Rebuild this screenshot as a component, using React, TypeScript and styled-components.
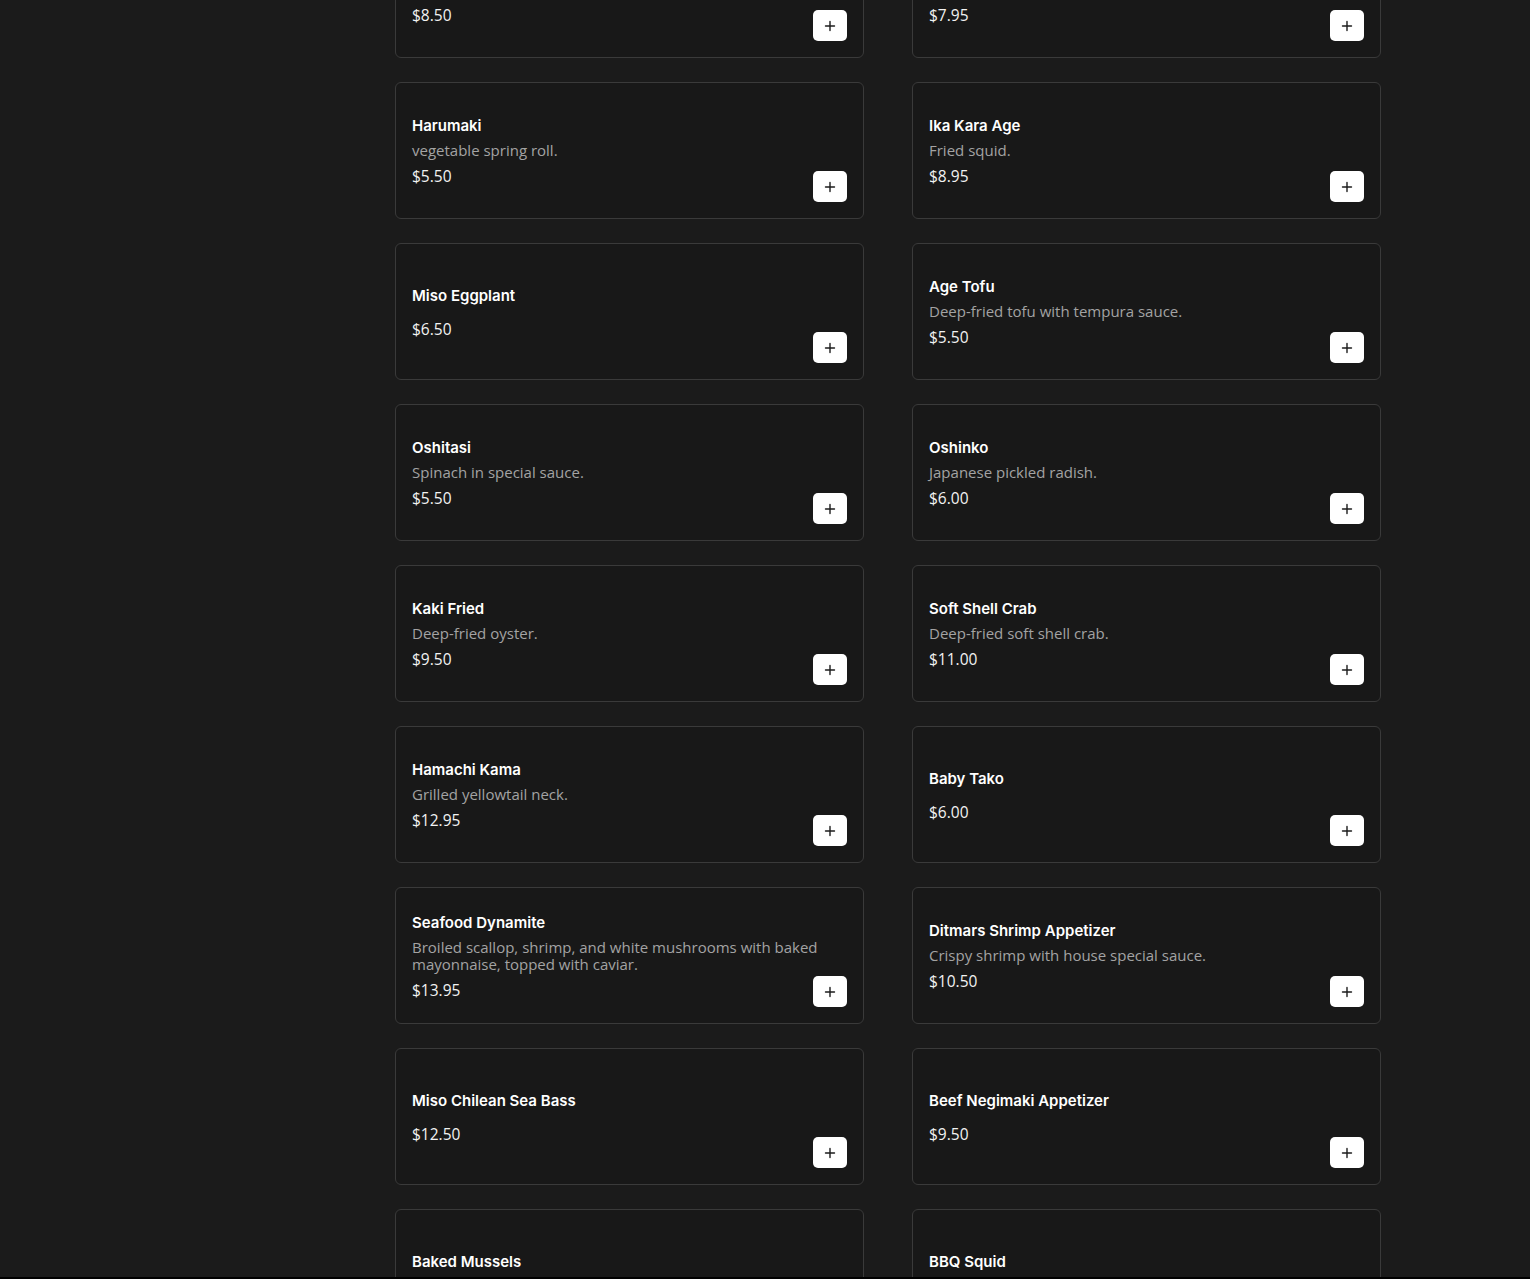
import React from 'react';
import styled, { createGlobalStyle } from 'styled-components';

interface Dish {
  name: string;
  desc?: string;
  price: string;
}

const dishes: Dish[] = [
  { name: 'Gyoza', desc: 'Pan-fried pork and vegetable dumplings.', price: '$8.50' },
  { name: 'Shrimp Tempura', desc: 'Shrimp and vegetable tempura.', price: '$7.95' },
  { name: 'Harumaki', desc: 'vegetable spring roll.', price: '$5.50' },
  { name: 'Ika Kara Age', desc: 'Fried squid.', price: '$8.95' },
  { name: 'Miso Eggplant', price: '$6.50' },
  { name: 'Age Tofu', desc: 'Deep-fried tofu with tempura sauce.', price: '$5.50' },
  { name: 'Oshitasi', desc: 'Spinach in special sauce.', price: '$5.50' },
  { name: 'Oshinko', desc: 'Japanese pickled radish.', price: '$6.00' },
  { name: 'Kaki Fried', desc: 'Deep-fried oyster.', price: '$9.50' },
  { name: 'Soft Shell Crab', desc: 'Deep-fried soft shell crab.', price: '$11.00' },
  { name: 'Hamachi Kama', desc: 'Grilled yellowtail neck.', price: '$12.95' },
  { name: 'Baby Tako', price: '$6.00' },
  {
    name: 'Seafood Dynamite',
    desc: 'Broiled scallop, shrimp, and white mushrooms with baked mayonnaise, topped with caviar.',
    price: '$13.95',
  },
  { name: 'Ditmars Shrimp Appetizer', desc: 'Crispy shrimp with house special sauce.', price: '$10.50' },
  { name: 'Miso Chilean Sea Bass', price: '$12.50' },
  { name: 'Beef Negimaki Appetizer', price: '$9.50' },
  { name: 'Baked Mussels', price: '$8.95' },
  { name: 'BBQ Squid', price: '$9.95' },
];

const PlusIcon = () => (
  <svg width="12" height="12" viewBox="0 0 12 12" fill="none">
    <path d="M6 1.5v9M1.5 6h9" stroke="#1c1c1c" strokeWidth="1.4" strokeLinecap="round" />
  </svg>
);

const App: React.FC = () => {
  return (
    <>
      <GlobalStyle />
      <Page>
        <Sidebar />
        <Main>
          <Grid>
            {dishes.map(d => (
              <Card key={d.name}>
                <Info>
                  <Name>{d.name}</Name>
                  <Desc>{d.desc}</Desc>
                  <Price>{d.price}</Price>
                </Info>
                <AddButton aria-label={`Add ${d.name}`}>
                  <PlusIcon />
                </AddButton>
              </Card>
            ))}
          </Grid>
        </Main>
      </Page>
    </>
  );
};

export default App;

const GlobalStyle = createGlobalStyle`
  * {
    box-sizing: border-box;
  }

  body {
    margin: 0;
    background: #1b1b1b;
    font-family: 'Open Sans', 'Noto Sans', sans-serif;
    color: #fff;
  }
`;

const Page = styled.div`
  display: grid;
  grid-template-columns: 395px 986px;
  height: 1279px;
  overflow: hidden;
  border-bottom: 2px solid #000;
`;

const Sidebar = styled.aside``;

const Main = styled.main`
  margin-top: -79px;
`;

const Grid = styled.div`
  display: grid;
  grid-template-columns: 469px 469px;
  column-gap: 48px;
  row-gap: 24px;
`;

/* info and button share one cell so long text may run under the button column */
const Card = styled.div`
  display: grid;
  grid-template-areas: 'stack';
  height: 137px;
  padding: 19px 16px 16px;
  background: #181818;
  border: 1px solid #3a3a3a;
  border-radius: 6px;
`;

const Info = styled.div`
  grid-area: stack;
  align-self: center;
  display: flex;
  flex-direction: column;
`;

const Name = styled.h3`
  margin: 0 0 6px;
  font-family: Inter, 'Noto Sans', sans-serif;
  font-size: 15px;
  font-weight: 600;
  line-height: 20px;
  color: #fff;
`;

const Desc = styled.p`
  margin: 0 0 5px;
  font-size: 15px;
  line-height: 17px;
  color: #a3a3a3;
`;

const Price = styled.span`
  font-size: 15.5px;
  line-height: 24px;
  color: #f2f2f2;
`;

const AddButton = styled.button`
  grid-area: stack;
  align-self: end;
  justify-self: end;
  display: flex;
  align-items: center;
  justify-content: center;
  width: 34px;
  height: 31px;
  padding: 0;
  background: #fff;
  border: none;
  border-radius: 5px;
  cursor: pointer;
`;
